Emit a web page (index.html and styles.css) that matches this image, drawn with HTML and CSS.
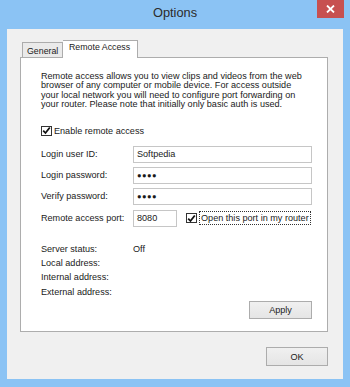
FILE: index.html
```html
<!DOCTYPE html>
<html lang="en">
<head>
    <meta charset="UTF-8">
    <meta name="viewport" content="width=device-width, initial-scale=1.0">
    <title>Options</title>
    <link rel="stylesheet" href="styles.css">
</head>
<body>
    <div class="window">
        <div class="titlebar">
            <span class="title">Options</span>
            <span class="close">
                <svg width="9" height="8" viewBox="0 0 9 8"><path d="M1 0.5 L8 7.5 M8 0.5 L1 7.5" stroke="#fff" stroke-width="1.8"/></svg>
            </span>
        </div>
        <div class="client">
            <div class="tabs">
                <span class="tab">General</span>
                <span class="tab active">Remote Access</span>
            </div>
            <div class="panel">
                <p class="intro">
                    Remote access allows you to view clips and videos from the web<br>
                    browser of any computer or mobile device. For access outside<br>
                    your local network you will need to configure port forwarding on<br>
                    your router. Please note that initially only basic auth is used.
                </p>
                <div class="check">
                    <span class="box"><svg width="9" height="9" viewBox="0 0 9 9"><path d="M1.2 4.6 L3.5 7 L7.8 1.5" fill="none" stroke="#111" stroke-width="1.8"/></svg></span>
                    <span>Enable remote access</span>
                </div>
                <div class="form">
                    <span class="label">Login user ID:</span>
                    <div class="field">Softpedia</div>
                    <span class="label">Login password:</span>
                    <div class="field dots">&#9679;&#9679;&#9679;&#9679;</div>
                    <span class="label">Verify password:</span>
                    <div class="field dots">&#9679;&#9679;&#9679;&#9679;</div>
                    <span class="label">Remote access port:</span>
                    <div class="port-row">
                        <div class="field port">8080</div>
                        <div class="check">
                            <span class="box"><svg width="9" height="9" viewBox="0 0 9 9"><path d="M1.2 4.6 L3.5 7 L7.8 1.5" fill="none" stroke="#111" stroke-width="1.8"/></svg></span>
                            <span class="focus">Open this port in my router</span>
                        </div>
                    </div>
                </div>
                <div class="status">
                    <span>Server status:</span><span>Off</span>
                    <span>Local address:</span><span></span>
                    <span>Internal address:</span><span></span>
                    <span>External address:</span><span></span>
                </div>
                <div class="panel-actions">
                    <button class="btn apply">Apply</button>
                </div>
            </div>
            <div class="actions">
                <button class="btn ok">OK</button>
            </div>
        </div>
    </div>
</body>
</html>
```

FILE: styles.css
```css
body, html {
    margin: 0;
    padding: 0;
    font-family: "Liberation Sans", Arial, sans-serif;
    background: #8bc3f4;
    color: #1a1a1a;
}

.window {
    width: 350px;
    height: 387px;
}

.titlebar {
    height: 29px;
    display: grid;
    grid-template-columns: 1fr auto 1fr;
    align-items: start;
}

.title {
    grid-column: 2;
    font-size: 12.8px;
    color: #2b2b2b;
    margin-top: 5px;
}

.close {
    grid-column: 3;
    justify-self: end;
    width: 27px;
    height: 18px;
    margin-right: 6px;
    background: #c75050;
    display: flex;
    align-items: center;
    justify-content: center;
}

.client {
    margin: 0 7px;
    height: 350px;
    background: #f0f0f0;
    padding: 11px 15px 0 13px;
    box-sizing: border-box;
    font-size: 9.1px;
}

.tabs {
    display: flex;
    align-items: flex-end;
    padding-left: 2px;
    height: 17px;
    position: relative;
    z-index: 1;
}

.tab {
    font-size: 8.8px;
    border: 1px solid #acacac;
    border-bottom: none;
    background: #eaeaea;
    padding: 0 4px;
    width: 41px;
    height: 15px;
    line-height: 16px;
    box-sizing: border-box;
}

.tab.active {
    background: #fff;
    width: 75px;
    height: 18px;
    line-height: 13px;
    padding: 0 6px;
    margin-bottom: -1px;
    border-left: none;
}

.panel {
    background: #fff;
    border: 1px solid #adadad;
    height: 275px;
    box-sizing: border-box;
    padding: 14px 15px 0 20px;
}

.intro {
    margin: 0;
    line-height: 9.4px;
}

.check {
    display: flex;
    align-items: center;
    gap: 2px;
}

.panel > .check {
    margin-top: 16px;
}

.box {
    width: 11px;
    height: 10px;
    border: 1px solid #333;
    box-sizing: border-box;
    background: #fff;
    display: flex;
    align-items: center;
    justify-content: center;
}

.form {
    display: grid;
    grid-template-columns: 92px 1fr;
    row-gap: 4px;
    align-items: center;
    margin-top: 10px;
}

.field {
    height: 17px;
    border: 1px solid #c6c6c6;
    box-sizing: border-box;
    padding: 0 3px;
    line-height: 14px;
    background: #fff;
}

.dots {
    font-size: 7.5px;
    letter-spacing: 0.5px;
    line-height: 15px;
}

.port-row {
    display: flex;
    align-items: center;
    gap: 9px;
    margin-top: 1px;
}

.port {
    width: 44px;
}

.focus {
    border: 1px dotted #333;
    padding: 1px 1px;
}

.status {
    display: grid;
    grid-template-columns: 92px 1fr;
    line-height: 14.3px;
    margin-top: 15px;
}

.panel-actions {
    display: flex;
    justify-content: flex-end;
    margin-top: 2px;
}

.btn {
    font-family: "Liberation Sans", Arial, sans-serif;
    font-size: 9.1px;
    color: #1a1a1a;
    background: linear-gradient(#f0f0f0, #e5e5e5);
    border: 1px solid #acacac;
    padding: 0;
}

.apply {
    width: 63px;
    height: 18px;
}

.actions {
    display: flex;
    justify-content: flex-end;
    margin-top: 15px;
}

.ok {
    width: 62px;
    height: 19px;
}
```
